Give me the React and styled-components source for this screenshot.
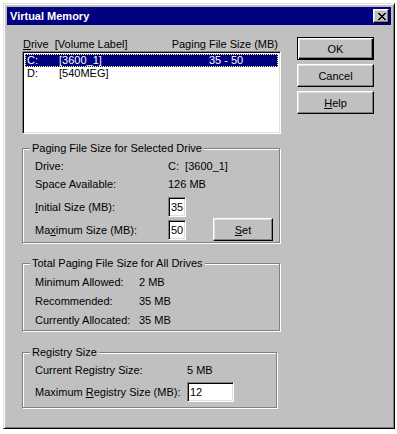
import React from 'react'
import styled, { createGlobalStyle } from 'styled-components'

const Global = createGlobalStyle`
  html, body { margin: 0; background: #fff; }
  body {
    font-family: "Liberation Sans", Arial, sans-serif;
    font-size: 11px;
    color: #000;
  }
  * { box-sizing: border-box; }
`

const Window = styled.div`
  width: 392px;
  height: 426px;
  margin: 3px 0 0 3px;
  padding: 3px;
  background: #c0c0c0;
  border: 1px solid;
  border-color: #dfdfdf #000 #000 #dfdfdf;
  box-shadow: inset 1px 1px #fff, inset -1px -1px #808080;
  display: flex;
  flex-direction: column;
`

const TitleBar = styled.div`
  height: 18px;
  background: #000080;
  color: #fff;
  font-weight: bold;
  display: flex;
  align-items: center;
  justify-content: space-between;
  padding: 0 2px 0 3px;
`

const CloseBox = styled.div`
  width: 16px;
  height: 14px;
  background: #c0c0c0;
  border: 1px solid;
  border-color: #fff #000 #000 #fff;
  box-shadow: inset -1px -1px #808080, inset 1px 1px #dfdfdf;
  display: flex;
  align-items: center;
  justify-content: center;
  padding-left: 1px;
`

const Body = styled.div`
  display: flex;
  gap: 16px;
  padding: 12px 0 0 15px;
`

const LeftCol = styled.div`
  width: 259px;
  display: flex;
  flex-direction: column;
`

const RightCol = styled.div`
  display: flex;
  flex-direction: column;
  gap: 4px;
`

const Header = styled.div`
  height: 13px;
  margin-top: 1px;
  padding: 0 3px 0 1px;
  display: flex;
  justify-content: space-between;
  line-height: 13px;
`

const Sunken = styled.div`
  background: #fff;
  border: 1px solid;
  border-color: #808080 #fff #fff #808080;
  box-shadow: inset 1px 1px #000, inset -1px -1px #dfdfdf;
`

const ListBox = styled(Sunken)`
  height: 83px;
  padding: 2px;
`

const ListRow = styled.div`
  height: 13px;
  line-height: 13px;
  display: grid;
  grid-template-columns: 32px 1fr 102px;
  padding: 0 1px 0 2px;
  background: ${p => (p.$selected ? '#000080' : 'transparent')};
  color: ${p => (p.$selected ? '#fff' : '#000')};
  outline: ${p => (p.$selected ? '1px dotted #ffff80' : 'none')};
  outline-offset: -1px;
`

const SizeCell = styled.span`
  text-align: center;
`

const Group = styled.fieldset`
  margin: ${p => p.$top}px 0 0 0;
  width: ${p => p.$width}px;
  padding: 0;
  min-width: 0;
  border: 1px solid #808080;
  box-shadow: inset 1px 1px #fff, 1px 1px #fff;
`

const Legend = styled.legend`
  margin-left: 7px;
  padding: 0 2px;
  line-height: 13px;
  background: #c0c0c0;
`

const GroupBody = styled.div`
  padding: ${p => p.$pad};
  display: flex;
  flex-direction: column;
`

const Row = styled.div`
  height: ${p => p.$h}px;
  display: flex;
  align-items: center;
  margin-top: ${p => p.$mt || 0}px;
`

const Label = styled.span`
  width: ${p => p.$w}px;
  flex: none;
`

const Field = styled(Sunken)`
  width: ${p => p.$w || 44}px;
  height: 20px;
  padding: 0 2px;
  display: flex;
  align-items: center;
`

const Button = styled.div`
  width: ${p => p.$w || 77}px;
  height: 23px;
  display: flex;
  align-items: center;
  justify-content: center;
  background: #c0c0c0;
  border: 1px solid;
  border-color: #fff #000 #000 #fff;
  box-shadow: inset -1px -1px #808080, inset 1px 1px #dfdfdf;
  margin-left: ${p => (p.$push ? 'auto' : '0')};
`

const DefaultButton = styled(Button)`
  border: 1px solid #000;
  box-shadow: inset 1px 1px #fff, inset -1px -1px #000, inset -2px -2px #808080, inset 2px 2px #dfdfdf;
`

const U = styled.span`
  text-decoration: underline;
  text-underline-offset: 1px;
`

function CloseGlyph() {
  const px = [
    [0, 0], [1, 0], [6, 0], [7, 0],
    [1, 1], [2, 1], [5, 1], [6, 1],
    [2, 2], [3, 2], [4, 2], [5, 2],
    [3, 3], [4, 3],
    [2, 4], [3, 4], [4, 4], [5, 4],
    [1, 5], [2, 5], [5, 5], [6, 5],
    [0, 6], [1, 6], [6, 6], [7, 6],
  ]
  return (
    <svg width="8" height="7" viewBox="0 0 8 7" shapeRendering="crispEdges">
      {px.map(([x, y]) => (
        <rect key={`${x}-${y}`} x={x} y={y} width="1" height="1" fill="#000" />
      ))}
    </svg>
  )
}

const drives = [
  { letter: 'C:', label: '[3600_1]', size: '35 - 50', selected: true },
  { letter: 'D:', label: '[540MEG]', size: '' },
]

export default function App() {
  return (
    <>
      <Global />
      <Window>
        <TitleBar>
          <span>Virtual Memory</span>
          <CloseBox><CloseGlyph /></CloseBox>
        </TitleBar>
        <Body>
          <LeftCol>
            <Header>
              <span><U>D</U>rive&nbsp;&nbsp;[Volume Label]</span>
              <span>Paging File Size (MB)</span>
            </Header>
            <ListBox>
              {drives.map(d => (
                <ListRow key={d.letter} $selected={d.selected}>
                  <span>{d.letter}</span>
                  <span>{d.label}</span>
                  <SizeCell>{d.size}</SizeCell>
                </ListRow>
              ))}
            </ListBox>

            <Group $top={8} $width={258}>
              <Legend>Paging File Size for Selected Drive</Legend>
              <GroupBody $pad="2px 6px 1px 12px">
                <Row $h={18}>
                  <Label $w={133}>Drive:</Label>
                  <span>C:&nbsp;&nbsp;[3600_1]</span>
                </Row>
                <Row $h={18}>
                  <Label $w={133}>Space Available:</Label>
                  <span>126 MB</span>
                </Row>
                <Row $h={22} $mt={3}>
                  <Label $w={133}><U>I</U>nitial Size (MB):</Label>
                  <Field $w={18}>35</Field>
                </Row>
                <Row $h={23}>
                  <Label $w={133}>Ma<U>x</U>imum Size (MB):</Label>
                  <Field $w={18}>50</Field>
                  <Button $w={60} $push><U>S</U>et</Button>
                </Row>
              </GroupBody>
            </Group>

            <Group $top={14} $width={258}>
              <Legend>Total Paging File Size for All Drives</Legend>
              <GroupBody $pad="2px 6px 1px 12px">
                <Row $h={19}>
                  <Label $w={104}>Minimum Allowed:</Label>
                  <span>2 MB</span>
                </Row>
                <Row $h={19}>
                  <Label $w={104}>Recommended:</Label>
                  <span>35 MB</span>
                </Row>
                <Row $h={19}>
                  <Label $w={104}>Currently Allocated:</Label>
                  <span>35 MB</span>
                </Row>
              </GroupBody>
            </Group>

            <Group $top={15} $width={255}>
              <Legend>Registry Size</Legend>
              <GroupBody $pad="2px 6px 4px 12px">
                <Row $h={18}>
                  <Label $w={152}>Current Registry Size:</Label>
                  <span>5 MB</span>
                </Row>
                <Row $h={22} $mt={2}>
                  <Label $w={152}>Maximum <U>R</U>egistry Size (MB):</Label>
                  <Field $w={47}>12</Field>
                </Row>
              </GroupBody>
            </Group>
          </LeftCol>

          <RightCol>
            <DefaultButton>OK</DefaultButton>
            <Button>Cancel</Button>
            <Button><U>H</U>elp</Button>
          </RightCol>
        </Body>
      </Window>
    </>
  )
}
